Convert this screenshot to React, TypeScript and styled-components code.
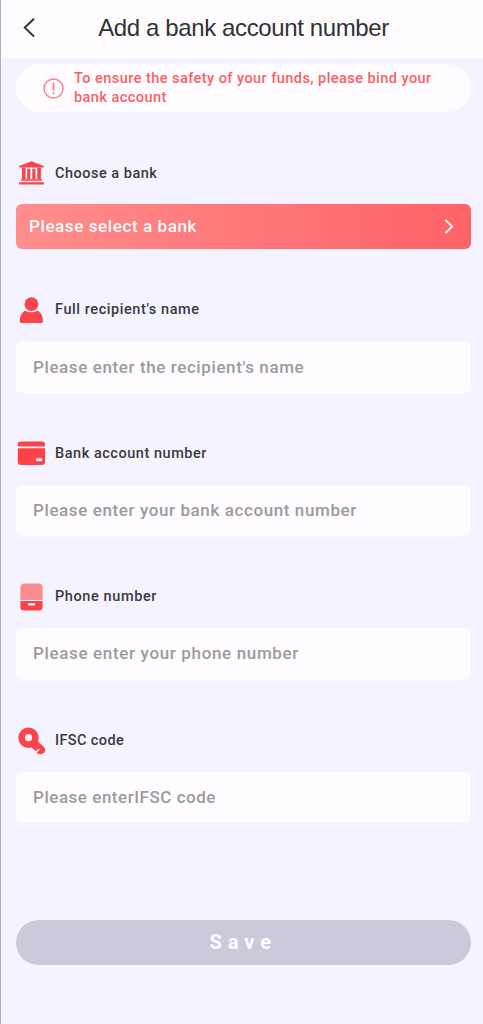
import React from 'react';
import styled, { createGlobalStyle } from 'styled-components';

const RED = '#fc4349';

const GlobalStyle = createGlobalStyle`
  * { box-sizing: border-box; }
  html, body { margin: 0; padding: 0; background: #f5f3ff; }
  button, input { font: inherit; border: 0; margin: 0; }
`;

const Page = styled.main`
  width: 100%;
  height: 1024px;
  overflow: hidden;
  border-left: 1px solid #b3b0c4;
  background: #f5f3ff;
  font-family: Roboto, 'Liberation Sans', sans-serif;
  font-weight: 500;
`;

const Header = styled.header`
  display: grid;
  grid-template-columns: 60px 1fr 57px;
  align-items: center;
  height: 58px;
  padding-bottom: 2px;
  background: #fefcff;
`;

const BackButton = styled.button`
  display: flex;
  width: 60px;
  height: 56px;
  padding: 17px 0 0 20px;
  background: none;
`;

const Title = styled.h1`
  margin: 0;
  text-align: center;
  white-space: nowrap;
  font: 400 24px/32px 'Liberation Sans', Arial, sans-serif;
  letter-spacing: -0.38px;
  color: #323233;
`;

const Content = styled.div`
  display: flex;
  flex-direction: column;
  padding: 6px 12.5px 0 15px;
`;

const Notice = styled.div`
  display: flex;
  align-items: center;
  height: 48px;
  padding-left: 27px;
  gap: 10px;
  border-radius: 24px;
  background: #fefcff;
  margin-bottom: 47px;
`;

const NoticeText = styled.p`
  margin: 0;
  padding-top: 1px;
  font-size: 14.5px;
  line-height: 18.5px;
  letter-spacing: 0.45px;
  white-space: nowrap;
  color: #fb6066;
`;

const Field = styled.section<{ $end: number }>`
  display: flex;
  flex-direction: column;
  gap: 17.4px;
  margin-bottom: ${(p) => p.$end}px;
`;

const Label = styled.label`
  display: flex;
  align-items: center;
  height: 28px;
  gap: 9px;
  padding-left: 1px;
  font-size: 14.5px;
  color: #3a3a3d;
`;

const LabelText = styled.span<{ $spacing: number }>`
  letter-spacing: ${(p) => p.$spacing}px;
`;

const Select = styled.button`
  display: flex;
  align-items: center;
  justify-content: space-between;
  height: 45px;
  padding: 0 17px 2px 13px;
  border-radius: 6px;
  background: linear-gradient(90deg, #ff8e8c, #ff6267);
  font-size: 17px;
  letter-spacing: 0.6px;
  color: #fefcff;
`;

const Input = styled.input<{ $spacing: number }>`
  width: 100%;
  height: 51.6px;
  padding: 0 17px 1px;
  border-radius: 6px;
  background: #fefcff;
  font-size: 17px;
  letter-spacing: ${(p) => p.$spacing}px;
  outline: none;
  &::placeholder { color: #9d9a9d; opacity: 1; }
`;

const SaveButton = styled.button`
  height: 45px;
  padding: 0 0 2px;
  border-radius: 23px;
  background: #cccada;
  font-size: 20px;
  font-weight: 700;
  letter-spacing: 5.9px;
  color: #fefcff;
`;

const Icon = styled.svg`
  display: block;
  flex: none;
`;

const BankIcon = () => (
  <Icon width="29" height="28" viewBox="0 0 29 28" fill={RED}>
    <path d="M14.5 2.2 26.8 7v1.600H2.200V7Z" />
    <path d="M5 8.500h3.600v12H5zM10.200 9.800h3.100v10.700h-3.100zM15.300 9.800h3.100v10.700h-3.100zM20.300 8.500h3.600v12h-3.600z" />
    <path d="M4 20.200h21v1.600H4zM2.200 23.200h24.600v2.400H2.200z" />
  </Icon>
);

const UserIcon = () => (
  <Icon width="29" height="28" viewBox="0 0 29 28" fill={RED}>
    <circle cx="14.4" cy="8.2" r="6.9" />
    <path d="M8 14.800q6.400 3.100 12.800 0C24 16.500 26 20.300 26 25.200q0 1.800-1.600 1.800H4.500Q2.800 27 2.800 25.200C2.800 20.300 4.800 16.500 8 14.800Z" />
  </Icon>
);

const CardIcon = () => (
  <Icon width="29" height="28" viewBox="0 0 29 28" fill={RED}>
    <path d="M.8 7.600V5.200Q.8 2.400 3.600 2.400h21.600q2.800 0 2.800 2.800v2.400Z" />
    <path d="M.8 9.200H28v13.900q0 2.800-2.800 2.800H3.600Q.8 25.900 .8 23.100Z" />
    <rect x="19" y="19.300" width="6.200" height="2.900" rx="1" fill="#fefcff" />
  </Icon>
);

const PhoneIcon = () => (
  <Icon width="29" height="28" viewBox="0 0 29 28">
    <path d="M3.400 17V4.500Q3.400 .5 7.400 .5H21.600Q25.600 .5 25.600 4.500V17Z" fill="#f98a90" />
    <path d="M3.400 18h22.200v6Q25.600 27.600 22 27.600H7Q3.400 27.600 3.400 24Z" fill={RED} />
    <rect x="11" y="20.300" width="7" height="2.300" rx=".8" fill="#fefcff" />
  </Icon>
);

const KeyIcon = () => (
  <Icon width="29" height="28" viewBox="0 0 29 28">
    <circle cx="11.500" cy="11.700" r="6.900" fill="none" stroke={RED} strokeWidth="6.600" />
    <path d="m17 17 3.500-2 6.200 5.700q1.600 1.500 1.500 3.300-.2 3.600-3.600 4-3.800 .4-5-1.200l3.300-3.300-1-1-3 2.700L14 20.900Z" fill={RED} />
  </Icon>
);

interface FormField {
  id: string;
  label: string;
  placeholder: string;
  icon: React.ReactNode;
  labelSpacing: number;
  spacing: number;
}

const fields: FormField[] = [
  { id: 'name', label: "Full recipient's name", placeholder: "Please enter the recipient's name", icon: <UserIcon />, labelSpacing: 0.57, spacing: 0.6 },
  { id: 'account', label: 'Bank account number', placeholder: 'Please enter your bank account number', icon: <CardIcon />, labelSpacing: 0.54, spacing: 0.6 },
  { id: 'phone', label: 'Phone number', placeholder: 'Please enter your phone number', icon: <PhoneIcon />, labelSpacing: 0.6, spacing: 0.65 },
  { id: 'ifsc', label: 'IFSC code', placeholder: 'Please enterIFSC code', icon: <KeyIcon />, labelSpacing: 0.38, spacing: 0.53 },
];

export default function App() {
  return (
    <>
      <GlobalStyle />
      <Page>
        <Header>
          <BackButton aria-label="Back">
            <Icon width="18" height="22" viewBox="0 0 18 22" fill="none" stroke="#323233" strokeWidth="2">
              <path d="M13 1.700 3.800 10.600 13 19.500" />
            </Icon>
          </BackButton>
          <Title>Add a bank account number</Title>
        </Header>
        <Content>
          <Notice>
            <Icon width="21" height="21" viewBox="0 0 21 21" fill="none" stroke="#f7858a" strokeWidth="1.500">
              <circle cx="10.500" cy="10.500" r="9.500" />
              <path d="M10.500 4.500v8.300M10.500 14.300v2" strokeWidth="1.800" />
            </Icon>
            <NoticeText>
              To ensure the safety of your funds, please bind your
              <br />
              bank account
            </NoticeText>
          </Notice>
          <Field $end={46.6}>
            <Label as="div">
              <BankIcon />
              <LabelText $spacing={0.5}>Choose a bank</LabelText>
            </Label>
            <Select>
              Please select a bank
              <Icon width="10" height="16" viewBox="0 0 10 16" fill="none" stroke="#fefcff" strokeWidth="1.800">
                <path d="m1.500 2 6.700 6.500L1.500 15" />
              </Icon>
            </Select>
          </Field>
          {fields.map((f, i) => (
            <Field key={f.id} $end={i === fields.length - 1 ? 97.2 : 46.4}>
              <Label htmlFor={f.id}>
                {f.icon}
                <LabelText $spacing={f.labelSpacing}>{f.label}</LabelText>
              </Label>
              <Input id={f.id} placeholder={f.placeholder} $spacing={f.spacing} />
            </Field>
          ))}
          <SaveButton>Save</SaveButton>
        </Content>
      </Page>
    </>
  );
}
